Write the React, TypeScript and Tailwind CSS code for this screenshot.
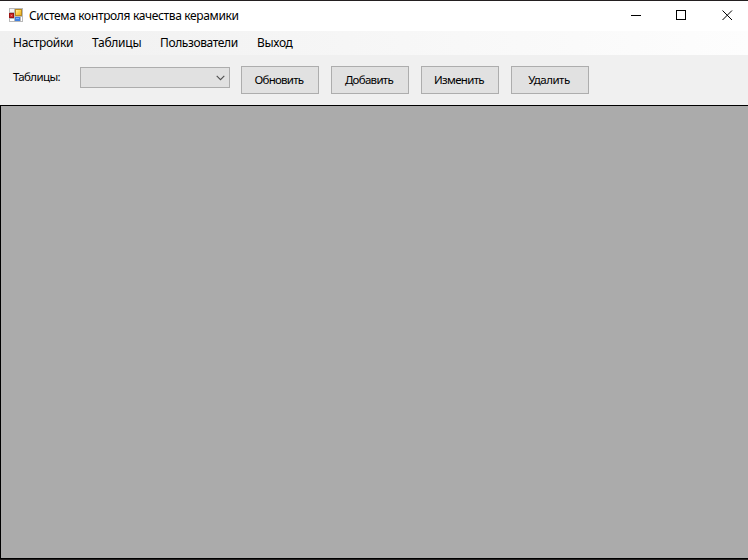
import React from "react";

const menuItems = [
  { label: "Настройки", style: "w-[60px] tracking-[-0.28px]" },
  { label: "Таблицы", style: "w-[49px] tracking-[-0.24px]" },
  { label: "Пользователи", style: "w-[78px] tracking-[-0.38px]" },
  { label: "Выход", style: "w-[36px] tracking-[-0.3px]" },
];

const actions = [
  { label: "Обновить", style: "tracking-[-0.75px]" },
  { label: "Добавить", style: "tracking-[-0.7px]" },
  { label: "Изменить", style: "tracking-[-0.68px]" },
  { label: "Удалить", style: "tracking-[-0.48px]" },
];

function AppIcon() {
  return (
    <svg width="14" height="14" viewBox="0 0 14 14" shapeRendering="crispEdges">
      <defs>
        <linearGradient id="gold" x1="0" y1="0" x2="1" y2="1">
          <stop offset="0" stopColor="#fff0b0" />
          <stop offset="0.5" stopColor="#fbcf45" />
          <stop offset="1" stopColor="#e9b02a" />
        </linearGradient>
      </defs>
      <rect width="14" height="14" fill="#b9b9b9" />
      <rect x="1" y="1" width="4" height="3" fill="#f4f4f4" />
      <rect x="1" y="11" width="4" height="2" fill="#fff" />
      <rect x="12" y="9" width="1" height="4" fill="#fff" />
      <rect x="0" y="5" width="5" height="5" fill="#9c1414" />
      <rect x="1" y="6" width="3" height="3" fill="#cf3030" />
      <rect x="2" y="7" width="1" height="1" fill="#f08070" />
      <rect x="6" y="1" width="7" height="7" fill="#b98a20" />
      <rect x="7" y="2" width="5" height="5" fill="url(#gold)" />
      <rect x="6" y="9" width="5" height="4" fill="#3f7fe0" />
      <rect x="7" y="10" width="3" height="1" fill="#82b2f7" />
    </svg>
  );
}

function TitleBar() {
  return (
    <header className="flex h-[31px] shrink-0 items-start border-t border-[#231f20] bg-white pl-[9px] pt-[7px]">
      <AppIcon />
      <h1 className="ml-[6px] flex-1 whitespace-nowrap text-[12px] leading-[16px] font-normal tracking-[-0.35px]">
        Система контроля качества керамики
      </h1>
      <div className="flex items-start gap-[35px] pr-[15px] pt-[2px]">
        <svg width="10" height="11" shapeRendering="crispEdges">
          <rect x="0" y="5" width="10" height="1" />
        </svg>
        <svg width="11" height="11" shapeRendering="crispEdges">
          <path d="M.5.5h9v9h-9z" fill="none" stroke="#000" />
        </svg>
        <svg width="11" height="11">
          <path d="M.5.5l9.5 9.5M10 .5L.5 10" fill="none" stroke="#000" strokeWidth="1" />
        </svg>
      </div>
    </header>
  );
}

export default function App() {
  return (
    <div className="flex h-[560px] w-[748px] flex-col overflow-hidden bg-[#f0f0f0] font-['Noto_Sans','Open_Sans',sans-serif] text-black">
      <TitleBar />
      <nav className="flex h-[24px] shrink-0 items-center gap-[19px] bg-linear-to-r from-[#f0f0f0] to-[#fdfdfd] pl-[13px] text-[12px] leading-[16px]">
        {menuItems.map((m) => (
          <span key={m.label} className={`whitespace-nowrap ${m.style}`}>
            {m.label}
          </span>
        ))}
      </nav>
      <section className="flex h-[50px] shrink-0 items-start pl-[13px] pt-[11px] text-[11.5px] leading-[14px]">
        <label className="mt-[4px] w-[67px] whitespace-nowrap tracking-[-0.62px]">Таблицы:</label>
        <div className="mt-px flex h-[21px] w-[150px] items-center justify-end border border-[#adadad] bg-[#e1e1e1] pr-[4px]">
          <svg width="9" height="6" viewBox="0 0 9 6">
            <path d="M.7.8l3.8 3.8L8.3.8" fill="none" stroke="#505050" strokeWidth="1.1" />
          </svg>
        </div>
        <div className="ml-[11px] flex gap-[12px]">
          {actions.map((a) => (
            <button
              key={a.label}
              className={`h-[28px] w-[78px] whitespace-nowrap border border-[#adadad] bg-[#e1e1e1] pr-[2px] ${a.style}`}
            >
              {a.label}
            </button>
          ))}
        </div>
      </section>
      <main className="h-[454px] shrink-0 border-y border-l border-black bg-[#ababab]" />
      <div className="h-px bg-[#231f20]" />
    </div>
  );
}
